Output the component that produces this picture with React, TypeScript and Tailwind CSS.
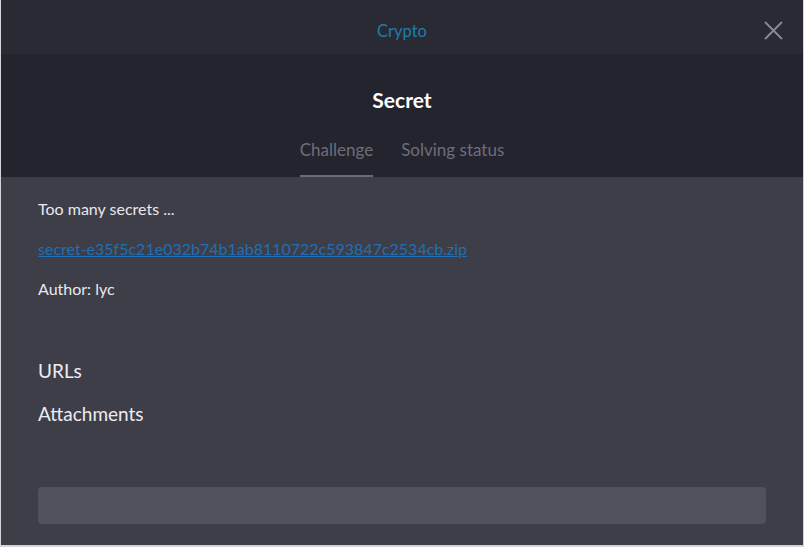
export default function App() {
  return (
    <div className="w-[804px] h-[547px] bg-[#d4d4d8] font-['Lato',sans-serif]">
      <div className="ml-px w-[802px] h-[545px] flex flex-col bg-[#3e3e48] overflow-hidden">
        <div className="relative h-[54px] shrink-0 bg-[#2a2a34] flex items-center justify-center">
          <span className="text-[16.5px] text-[#1c7fa9] mt-[8px]">Crypto</span>
          <button className="absolute right-[20px] top-[21px] text-[#8b8b95]">
            <svg width="19" height="19" viewBox="0 0 19 19" fill="none" stroke="currentColor" strokeWidth="1.8">
              <path d="M1 1 L18 18 M18 1 L1 18" />
            </svg>
          </button>
        </div>

        <div className="h-[123px] shrink-0 bg-[#24242e] flex flex-col items-center">
          <h1 className="mt-[33px] text-[21px] font-bold text-white leading-[26px]">Secret</h1>
          <div className="mt-[25px] flex gap-[28px] text-[17px] text-[#6d6d7b]">
            <div className="flex flex-col items-center">
              <span className="leading-[24px]">Challenge</span>
              <span className="mt-[13px] h-[2px] w-full bg-[#6b6b78]" />
            </div>
            <span className="leading-[24px]">Solving status</span>
          </div>
        </div>

        <div className="flex-1 px-[37px] pt-[20px] text-[#e8e8ee] text-[16px]">
          <p className="leading-[24px]">Too many secrets ...</p>
          <a href="#" className="block mt-[16px] leading-[24px] text-[#1f6fb4] underline">
            secret-e35f5c21e032b74b1ab8110722c593847c2534cb.zip
          </a>
          <p className="mt-[16px] leading-[24px]">Author: lyc</p>

          <h2 className="mt-[57px] text-[19px] leading-[26px] text-[#ececf2]">URLs</h2>
          <h2 className="mt-[17px] text-[19px] leading-[26px] text-[#ececf2]">Attachments</h2>

          <div className="mt-[60px] h-[37px] rounded-[4px] bg-[#51515b]" />
        </div>
      </div>
    </div>
  );
}
